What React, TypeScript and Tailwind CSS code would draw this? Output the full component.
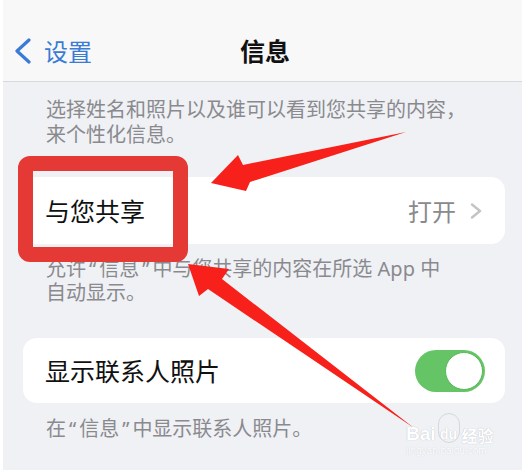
import React from 'react';

const font = { fontFamily: '"Noto Sans CJK SC", "Noto Sans", sans-serif' };
// latin first so the quotes and "App" come out proportional, as on the phone
const noteFont = { fontFamily: '"Noto Sans", "Noto Sans CJK SC", sans-serif' };

function Q({ children }: { children: React.ReactNode }) {
  return <span className="px-[3px]">{children}</span>;
}

function Toggle() {
  return (
    <div className="flex h-[42px] w-[70px] items-center justify-end rounded-full bg-[#65c466] p-[2px]">
      <div className="h-[38px] w-[38px] rounded-full border border-[#5bb85c] bg-white" />
    </div>
  );
}

export default function App() {
  return (
    <div className="relative h-[470px] w-[529px] overflow-hidden bg-white" style={font}>
      <div className="ml-[3px] flex h-[470px] w-[519px] flex-col bg-[#eff1f5]">
        {/* nav */}
        <div className="grid h-[82px] grid-cols-[1fr_auto_1fr] items-center border-b border-[#d9d9dc] bg-[#f8f8f9] pt-[20px]">
          <div className="flex items-center gap-[11px] pl-[10px] text-[#3a7bd5]">
            <svg width="20" height="26" viewBox="0 0 20 26" fill="none">
              <path d="M16 2 L4 13 L16 24" stroke="#3a7bd5" strokeWidth="3.2" strokeLinecap="round" strokeLinejoin="round" />
            </svg>
            <span className="text-[24px] leading-none">设置</span>
          </div>
          <div className="pl-[5px] text-[25px] font-bold leading-none text-[#111]">信息</div>
          <div />
        </div>

        <div className="flex flex-col px-[20px]">
          <p className="mt-[14px] pl-[23px] text-[20px] leading-[25px] text-[#8a8a8e]">
            选择姓名和照片以及谁可以看到您共享的内容，<br />来个性化信息。
          </p>

          <div className="mt-[31px] flex h-[67px] w-[482px] items-center justify-between rounded-[14px] bg-white pl-[22px] pr-[23px]">
            <span className="text-[25px] text-[#111]">与您共享</span>
            <div className="flex items-center gap-[14px]">
              <span className="text-[24px] text-[#8a8a8e]">打开</span>
              <svg width="12" height="16" viewBox="0 0 12 16" fill="none">
                <path d="M2 1.5 L10 8 L2 14.5" stroke="#c4c4c7" strokeWidth="2.4" strokeLinecap="round" strokeLinejoin="round" />
              </svg>
            </div>
          </div>

          <p className="mt-[13px] pl-[23px] text-[20px] leading-[24px] text-[#8a8a8e]" style={noteFont}>
            允许<Q>“</Q>信息<Q>”</Q>中与您共享的内容在所选 App 中<br />自动显示。
          </p>

          <div className="mt-[33px] flex h-[65px] w-[482px] items-center justify-between rounded-[14px] bg-white pl-[22px] pr-[20px]">
            <span className="text-[25px] text-[#111]">显示联系人照片</span>
            <Toggle />
          </div>

          <p className="mt-[13px] pl-[23px] text-[20px] leading-[25px] text-[#8a8a8e]" style={noteFont}>
            在<Q>“</Q>信息<Q>”</Q>中显示联系人照片。
          </p>
        </div>
      </div>

      {/* red highlight box */}
      <div className="absolute left-[18px] top-[156px] h-[106px] w-[170px] rounded-[12px] border-[15px] border-[#e53935]" />

      {/* arrows */}
      <svg className="absolute left-0 top-0" width="529" height="470" viewBox="0 0 529 470">
        <polygon points="211,183 238,155 243,165 406,132 250,182 246,191" fill="#f7201a" />
        <polygon points="188,264 229,269 222,279 414,428 208,289 199,296" fill="#f7201a" />
      </svg>

      {/* watermark */}
      <div className="absolute left-[406px] top-[413px] flex flex-col items-start" style={{ fontFamily: '"Liberation Sans", "Noto Sans CJK SC", sans-serif' }}>
        <div className="flex items-end text-white [text-shadow:0_0_1px_#aeb2ba]">
          <span className="text-[19px] font-bold leading-none">Bai</span>
          <span className="mx-[2px] flex h-[30px] w-[22px] items-end justify-center rounded-full border border-[#d5d8dd] pb-[1px] text-[14px] font-bold leading-none">du</span>
          <span className="text-[16px] font-bold leading-none" style={font}>经验</span>
        </div>
        <span className="mt-[3px] text-[10px] leading-none text-white [text-shadow:0_0_1px_#c4c7cd]">jingyan.baidu.com</span>
      </div>
    </div>
  );
}
